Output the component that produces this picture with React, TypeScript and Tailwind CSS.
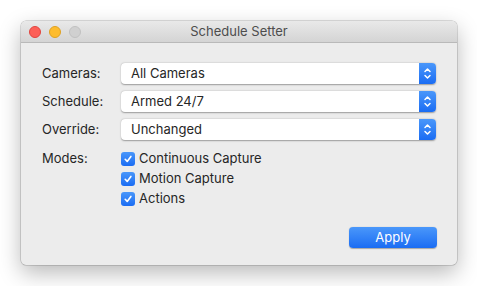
import React, { useState } from 'react';

const font = { fontFamily: 'Inter, "Liberation Sans", Arial, sans-serif' };

function Stepper() {
    return (
        <div className="w-[17px] h-full rounded-r-[4px] bg-gradient-to-b from-[#4a97fa] to-[#1a6cf3] flex items-center justify-center">
            <svg width="9" height="13" viewBox="0 0 9 13" fill="none" stroke="white" strokeWidth="1.5" strokeLinecap="round" strokeLinejoin="round">
                <path d="M2 4.5 L4.5 2 L7 4.5" />
                <path d="M2 8.5 L4.5 11 L7 8.5" />
            </svg>
        </div>
    );
}

function Popup({ value }: { value: string }) {
    return (
        <div className="h-[21px] flex bg-white rounded-[4px] shadow-[0_0.5px_1.5px_rgba(0,0,0,0.35)]">
            <div className="flex-1 flex items-center pl-[10px] text-[13px] text-[#262626]">{value}</div>
            <Stepper />
        </div>
    );
}

function Check({ label, checked, onToggle }: { label: string; checked: boolean; onToggle: () => void }) {
    return (
        <div className="h-[20px] flex items-center gap-[4px] cursor-default" onClick={onToggle}>
            <div
                className={
                    checked
                        ? 'w-[14px] h-[14px] rounded-[3px] bg-gradient-to-b from-[#4a97fa] to-[#1a6cf3] flex items-center justify-center'
                        : 'w-[14px] h-[14px] rounded-[3px] bg-white shadow-[0_0_0_0.5px_rgba(0,0,0,0.35)]'
                }
            >
                {checked && (
                    <svg width="10" height="10" viewBox="0 0 10 10" fill="none" stroke="white" strokeWidth="1.6" strokeLinecap="round" strokeLinejoin="round">
                        <path d="M2.2 5.3 L4.2 7.4 L7.9 2.4" />
                    </svg>
                )}
            </div>
            <span className="text-[13px] text-[#262626]">{label}</span>
        </div>
    );
}

export default function App() {
    const [modes, setModes] = useState([true, true, true]);
    const toggle = (i: number) => setModes((m) => m.map((v, j) => (j === i ? !v : v)));

    return (
        <div className="w-[477px] h-[286px] bg-white pt-[21px] pl-[21px]" style={font}>
            <div className="w-[436px] h-[244px] rounded-[5px] bg-[#ececec] overflow-hidden shadow-[0_8px_22px_rgba(0,0,0,0.28),0_0_0_0.5px_rgba(0,0,0,0.25)] flex flex-col">
                {/* title bar */}
                <div className="h-[22px] relative flex items-center bg-gradient-to-b from-[#e9e9e9] to-[#d4d4d4] border-b border-[#b9b9b9]">
                    <div className="flex gap-[8px] pl-[8px]">
                        <div className="w-[12px] h-[12px] rounded-full bg-[#fc5f57] border border-[#e0443e]" />
                        <div className="w-[12px] h-[12px] rounded-full bg-[#fdbc2e] border border-[#dea123]" />
                        <div className="w-[12px] h-[12px] rounded-full bg-[#d0d0d0] border border-[#c0c0c0]" />
                    </div>
                    <div className="absolute inset-0 flex items-center justify-center text-[13px] text-[#4d4d4d]">Schedule Setter</div>
                </div>

                {/* content */}
                <div className="flex-1 pl-[21px] pr-[21px] pt-[20px]">
                    <div className="grid grid-cols-[79px_1fr] gap-y-[7px] text-[13px] text-[#262626]">
                        <div className="h-[21px] flex items-center">Cameras:</div>
                        <Popup value="All Cameras" />
                        <div className="h-[21px] flex items-center">Schedule:</div>
                        <Popup value="Armed 24/7" />
                        <div className="h-[21px] flex items-center">Override:</div>
                        <Popup value="Unchanged" />
                    </div>
                    <div className="grid grid-cols-[79px_1fr] mt-[9px] text-[13px] text-[#262626]">
                        <div className="h-[20px] flex items-center">Modes:</div>
                        <div className="flex flex-col">
                            <Check label="Continuous Capture" checked={modes[0]} onToggle={() => toggle(0)} />
                            <Check label="Motion Capture" checked={modes[1]} onToggle={() => toggle(1)} />
                            <Check label="Actions" checked={modes[2]} onToggle={() => toggle(2)} />
                        </div>
                    </div>
                    <div className="flex justify-end mt-[18px] mr-[-1px]">
                        <button className="w-[88px] h-[21px] rounded-[4px] bg-gradient-to-b from-[#4a97fa] to-[#1a6cf3] text-white text-[13px] shadow-[0_0.5px_1px_rgba(0,0,0,0.3)]">
                            Apply
                        </button>
                    </div>
                </div>
            </div>
        </div>
    );
}
